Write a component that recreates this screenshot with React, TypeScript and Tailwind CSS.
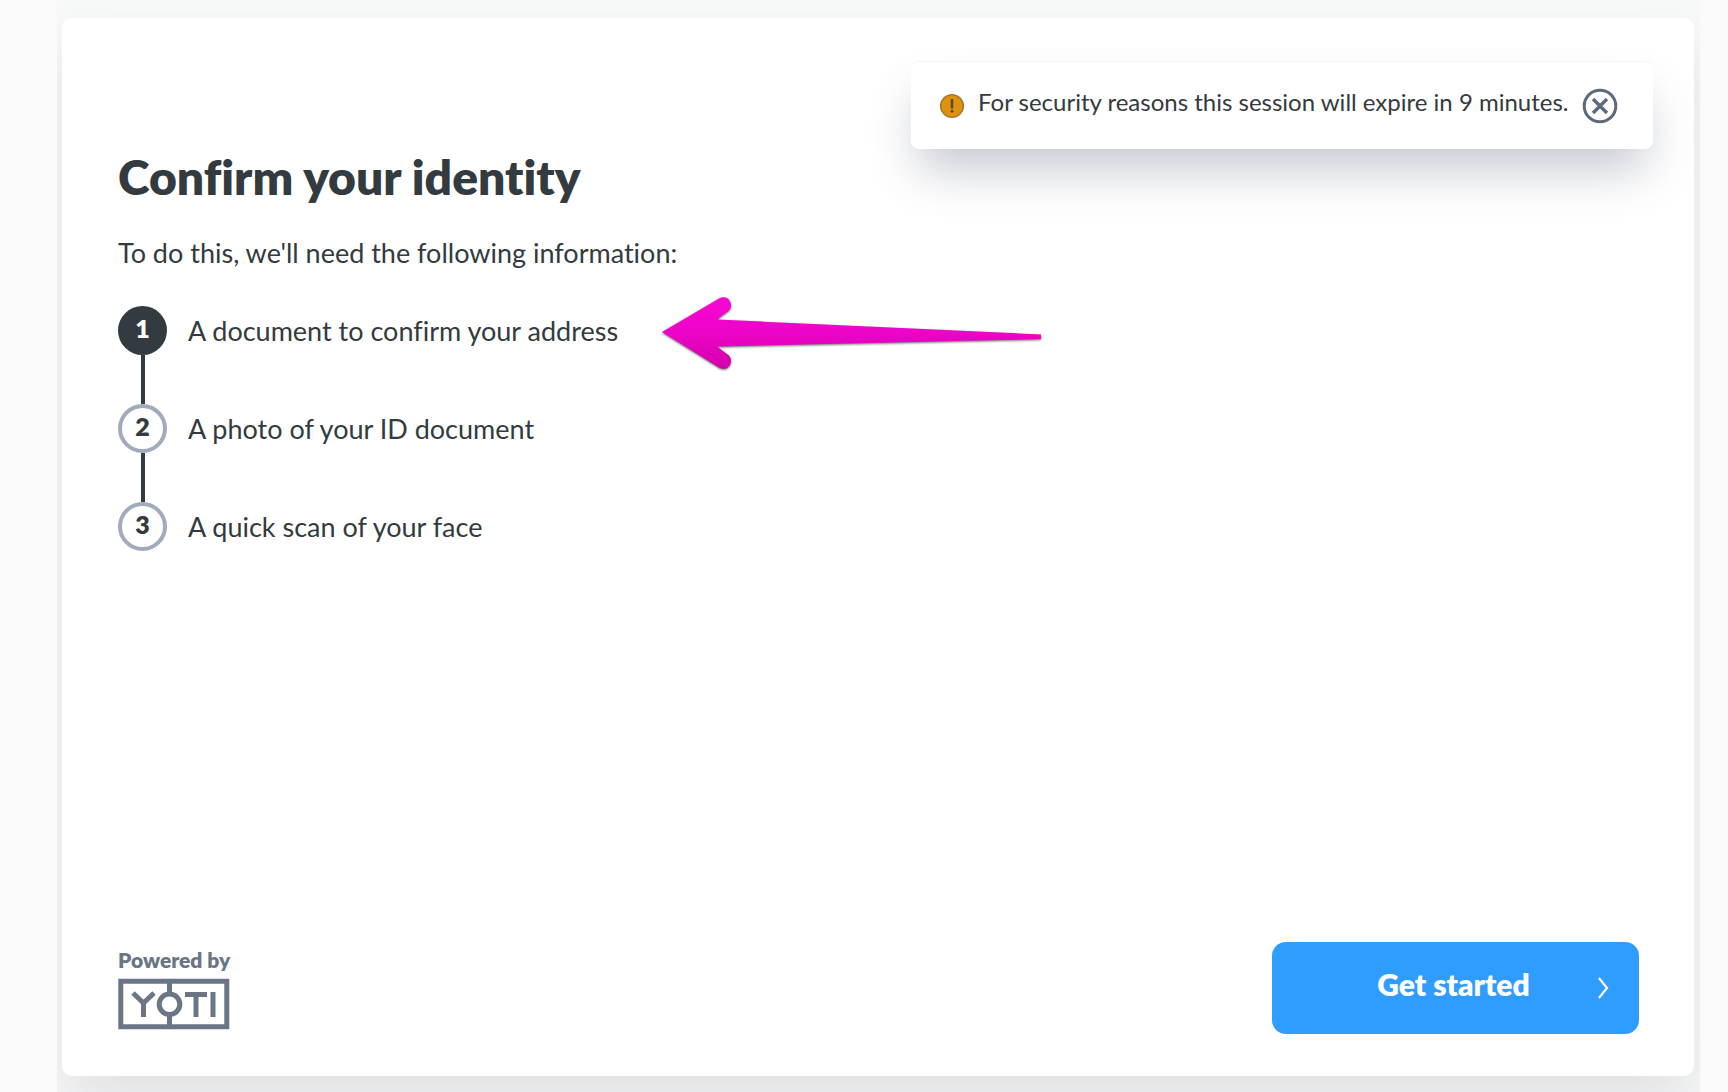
import React, { useState } from 'react';

interface Step {
  id: number;
  label: string;
}

const STEPS: Step[] = [
  { id: 1, label: 'A document to confirm your address' },
  { id: 2, label: 'A photo of your ID document' },
  { id: 3, label: 'A quick scan of your face' },
];

const WarningIcon: React.FC = () => (
  <svg className="w-6 h-[26px] shrink-0" viewBox="0 0 24 26" aria-hidden="true">
    <circle cx="12" cy="13" r="11.3" fill="#dd930f" stroke="#a8782a" strokeWidth="1.6" />
    <path d="M12 7v7.5" stroke="#5f4a22" strokeWidth="2.6" strokeLinecap="round" />
    <circle cx="12" cy="18.3" r="1.5" fill="#5f4a22" />
  </svg>
);

const CloseIcon: React.FC = () => (
  <svg className="w-9 h-9" viewBox="0 0 36 36" fill="none" stroke="#5d6a7c" strokeWidth="3" aria-hidden="true">
    <circle cx="18" cy="18" r="15.8" />
    <path d="M11 11l14 14M25 11L11 25" strokeWidth="3.4" />
  </svg>
);

const ChevronIcon: React.FC = () => (
  <svg className="w-3 h-6" viewBox="0 0 12 24" fill="none" stroke="#fff" strokeWidth="2.2" aria-hidden="true">
    <path d="M2 2l8 10-8 10" />
  </svg>
);

const YotiLogo: React.FC = () => (
  <svg className="w-28 h-[52px]" viewBox="0 0 112 52" fill="none" stroke="#6a7685" strokeWidth="5" role="img" aria-label="Yoti">
    <path d="M2.8 3.2h106v45.6H2.8z" />
    <path d="M51.5 3v12M51.5 38v11" />
    <circle cx="51.5" cy="26.3" r="10.3" />
    <path d="M15 15l10.5 10L36 15M25.5 24v15" />
    <path d="M67 16.5h22M78 17v22M95 14v25" />
  </svg>
);

const Arrow: React.FC = () => (
  <svg className="w-[384px] h-[76px]" viewBox="0 0 384 76" aria-hidden="true">
    <defs>
      <linearGradient id="arrow-fill" x1="0" y1="0" x2="0" y2="1">
        <stop offset="0" stopColor="#f806d4" />
        <stop offset="0.5" stopColor="#ec04c8" />
        <stop offset="1" stopColor="#d400aa" />
      </linearGradient>
    </defs>
    <path
      className="drop-shadow-[0_1px_1px_rgba(0,0,0,0.6)]"
      fill="url(#arrow-fill)"
      d="M2 36L59 2.5C65 -1 71 3 71 9C71 12 70 14 67 16L57 23.5L381 38.5V43L57 50.5L67 58C70 60 71 62 71 65C71 71 65 75 59 71.5Z"
    />
  </svg>
);

const SessionToast: React.FC<{ onClose: () => void }> = ({ onClose }) => (
  <div
    role="status"
    className="flex items-center w-[742px] h-[88px] pl-[29px] pr-[35px] rounded-lg bg-white border-t border-gray-100 shadow-[0_28px_48px_-8px_rgba(70,85,110,0.32)]"
  >
    <WarningIcon />
    <p className="flex-1 pl-3.5 pb-2 text-[24px] leading-8 whitespace-nowrap">
      For security reasons this session will expire in 9 minutes.
    </p>
    <button type="button" onClick={onClose} aria-label="Close">
      <CloseIcon />
    </button>
  </div>
);

const App: React.FC = () => {
  const [toastOpen, setToastOpen] = useState(true);

  return (
    <div className="flex min-h-screen bg-[#fafafa] pl-[57px] pr-7 font-['Lato',sans-serif] text-[#333b40] [font-variant-ligatures:none]">
      <div className="flex flex-1 overflow-hidden bg-[#f8f9f9] pl-[5px] pr-1.5 pt-[18px] pb-4">
        <main className="flex flex-1 flex-col rounded-[10px] bg-white pb-[42px] shadow-[0_28px_56px_rgba(50,60,70,0.12)]">
          <div className="flex justify-end h-[131px] pt-[43px] pr-[41px]">
            {toastOpen && <SessionToast onClose={() => setToastOpen(false)} />}
          </div>

          <div className="flex-1 px-14">
            <h1 className="text-[48px] leading-[56px] font-extrabold">Confirm your identity</h1>
            <p className="mt-[30px] text-[27px] leading-9">To do this, we'll need the following information:</p>

            <div className="flex items-start mt-[35px]">
              <ol>
                {STEPS.map((step, index) => (
                  <li key={step.id} className="flex gap-[21px]">
                    <div className="flex flex-col items-center">
                      <span
                        className={`flex items-center justify-center size-[49px] pb-1.5 rounded-full text-[25px] leading-8 font-extrabold ${
                          step.id === 1 ? 'bg-[#333b40] text-white' : 'border-4 border-[#a0abbb] bg-white'
                        }`}
                      >
                        {step.id}
                      </span>
                      {index < STEPS.length - 1 && <span className="w-1 h-[49px] bg-[#333b40]" />}
                    </div>
                    <span className="pt-[7px] text-[27px] leading-9 whitespace-nowrap">{step.label}</span>
                  </li>
                ))}
              </ol>
              <div className="-mt-2.5 ml-[42px]">
                <Arrow />
              </div>
            </div>
          </div>

          <footer className="flex items-end justify-between pl-14 pr-[55px]">
            <div className="pb-1">
              <p className="mb-1.5 text-[21px] leading-6 font-extrabold text-[#6a7685]">Powered by</p>
              <YotiLogo />
            </div>
            <button
              type="button"
              className="grid grid-cols-[1fr_auto_1fr] items-center w-[367px] h-[92px] pl-[26px] pr-[30px] rounded-[14px] bg-[#2e9dff] text-white"
            >
              <span className="col-start-2 pb-2 text-[30px] leading-9 font-extrabold">Get started</span>
              <span className="justify-self-end">
                <ChevronIcon />
              </span>
            </button>
          </footer>
        </main>
      </div>
    </div>
  );
};

export default App;
